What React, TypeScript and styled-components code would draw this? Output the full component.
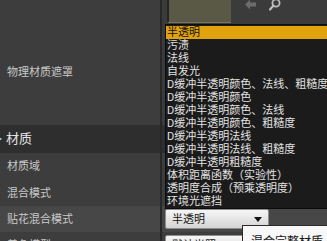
import React from "react";
import styled, { createGlobalStyle } from "styled-components";

const GlobalStyle = createGlobalStyle`
  html, body {
    margin: 0;
    padding: 0;
    background: #3d3d3d;
  }
  body {
    font-family: Roboto, "Noto Sans CJK SC", sans-serif;
  }
`;

const Panel = styled.div`
  position: relative;
  width: 327px;
  height: 241px;
  overflow: hidden;
  background: #3d3d3d;
`;

const Row = styled.div<{ $height: number; $hover?: boolean }>`
  display: grid;
  grid-template-columns: 160px 2px 1fr;
  height: ${(p) => p.$height}px;
  background: ${(p) => (p.$hover ? "#474747" : "#3d3d3d")};
`;

const Label = styled.div<{ $top?: number }>`
  padding-left: 7px;
  padding-top: ${(p) => p.$top ?? 0}px;
  display: flex;
  align-items: ${(p) => (p.$top ? "flex-start" : "center")};
  font-size: 11px;
  line-height: 13px;
  color: #c9c9c9;
  white-space: nowrap;
`;

const Splitter = styled.div`
  background: #272727;
`;

const Value = styled.div`
  display: flex;
  align-items: center;
  padding-left: 3px;
  min-width: 0;
`;

const AssetValue = styled.div`
  display: flex;
  align-items: flex-start;
  padding-left: 5px;
  background: #3b3b3b;
`;

const Thumb = styled.div`
  width: 64px;
  height: 23px;
  background: #5a5946;
  border-left: 2px solid #262626;
  border-bottom: 1px solid #77765e;
  box-sizing: border-box;
`;

const Tools = styled.div`
  display: flex;
  align-items: flex-start;
  gap: 12px;
  margin-left: 14px;
`;

const Category = styled.div`
  display: grid;
  grid-template-columns: 160px 2px 1fr;
  height: 28px;
  background: #2e2e2e;
`;

const CategoryTitle = styled.div`
  display: flex;
  align-items: center;
  gap: 4px;
  font-size: 13px;
  line-height: 16px;
  color: #e4e4e4;
`;

const Combo = styled.div<{ $width: number }>`
  box-sizing: border-box;
  width: ${(p) => p.$width}px;
  height: 20px;
  display: flex;
  align-items: center;
  justify-content: space-between;
  padding: 0 6px 0 6px;
  background: linear-gradient(#f6f6f6, #d4d4d4);
  border: 1px solid #8e8e8e;
  border-radius: 2px;
  font-size: 11px;
  line-height: 13px;
  color: #141414;
`;

const Caret = styled.span`
  width: 0;
  height: 0;
  border-left: 4px solid transparent;
  border-right: 4px solid transparent;
  border-top: 5px solid #111;
`;

const Dropdown = styled.ul`
  position: absolute;
  left: 165px;
  top: 24px;
  width: 180px;
  margin: 0;
  padding: 1px 0 0 0;
  list-style: none;
  background: #1b1b1b;
  border: 1px solid #0c0c0c;
  box-sizing: border-box;
`;

const Option = styled.li<{ $active?: boolean }>`
  height: 13px;
  padding-left: 1px;
  font-size: 11px;
  line-height: 13px;
  white-space: nowrap;
  color: ${(p) => (p.$active ? "#111" : "#e2e2e2")};
  background: ${(p) => (p.$active ? "#e1a30d" : "transparent")};
`;

const Tooltip = styled.div`
  position: absolute;
  left: 242px;
  top: 225px;
  width: 120px;
  height: 40px;
  box-sizing: border-box;
  padding: 9px 0 0 8px;
  background: #f7f7f7;
  border: 1px solid #2a2a2a;
  font-size: 12px;
  line-height: 14px;
  color: #161616;
  white-space: nowrap;
`;

const options = [
  "半透明",
  "污渍",
  "法线",
  "自发光",
  "D缓冲半透明颜色、法线、粗糙度",
  "D缓冲半透明颜色",
  "D缓冲半透明颜色、法线",
  "D缓冲半透明颜色、粗糙度",
  "D缓冲半透明法线",
  "D缓冲半透明法线、粗糙度",
  "D缓冲半透明粗糙度",
  "体积距离函数（实验性）",
  "透明度合成（预乘透明度）",
  "环境光遮挡",
];

const App = () => {
  return (
    <Panel>
      <GlobalStyle />
      <Row $height={125}>
        <Label $top={66}>物理材质遮罩</Label>
        <Splitter />
        <AssetValue>
          <Thumb />
          <Tools>
            <svg width="12" height="10" viewBox="0 0 12 10">
              <polygon points="0,4.5 5,-0.5 5,2.5 11,2.5 11,6.5 5,6.5 5,9.5" fill="#6c6c6c" />
            </svg>
            <svg width="12" height="11" viewBox="0 0 12 11">
              <circle cx="7" cy="3" r="3.6" fill="none" stroke="#bdbdbd" strokeWidth="1.8" />
              <line x1="4.3" y1="5.8" x2="1" y2="9.5" stroke="#bdbdbd" strokeWidth="2.2" strokeLinecap="round" />
            </svg>
          </Tools>
        </AssetValue>
      </Row>
      <Category>
        <CategoryTitle>
          <svg width="2" height="6" viewBox="0 0 2 6">
            <polygon points="-3,0 2,3 -3,6" fill="#cfcfcf" />
          </svg>
          材质
        </CategoryTitle>
        <Splitter />
        <div />
      </Category>
      <Row $height={27}>
        <Label>材质域</Label>
        <Splitter />
        <Value />
      </Row>
      <Row $height={26}>
        <Label>混合模式</Label>
        <Splitter />
        <Value />
      </Row>
      <Row $height={26} $hover>
        <Label>贴花混合模式</Label>
        <Splitter />
        <Value>
          <Combo $width={104}>
            半透明
            <Caret />
          </Combo>
        </Value>
      </Row>
      <Row $height={26}>
        <Label>着色模型</Label>
        <Splitter />
        <Value>
          <Combo $width={104}>
            默认光照
            <Caret />
          </Combo>
        </Value>
      </Row>
      <Dropdown>
        {options.map((o, i) => (
          <Option key={o} $active={i === 0}>
            {o}
          </Option>
        ))}
      </Dropdown>
      <Tooltip>混合完整材质，更新</Tooltip>
    </Panel>
  );
};

export default App;
